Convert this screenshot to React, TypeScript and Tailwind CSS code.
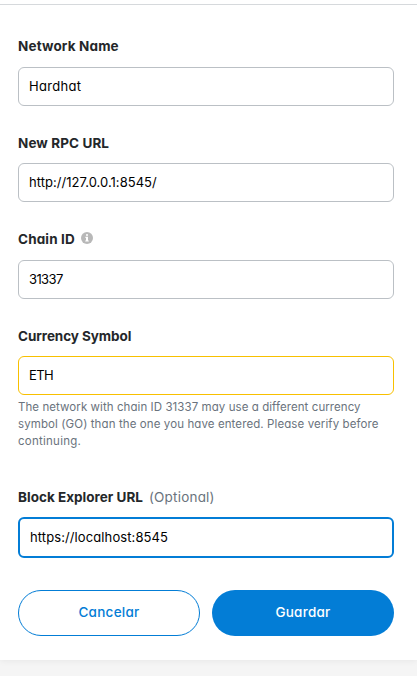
import type { ReactNode } from "react";

type FieldProps = {
  label: ReactNode;
  value: string;
  labelSpacing: string;
  valueSpacing: string;
  className?: string;
  boxClassName?: string;
  children?: ReactNode;
  extra?: ReactNode;
};

function Field({ label, value, labelSpacing, valueSpacing, className = "", boxClassName = "mt-[11px] h-[39px] border border-[#bbc0c5] px-[10px]", children, extra }: FieldProps) {
  return (
    <div className={className}>
      <div className="flex h-5 items-center text-[13.5px] leading-5 text-[#24272a]">
        <span className={`whitespace-nowrap font-bold ${labelSpacing}`}>{label}</span>
        {extra}
      </div>
      <div role="textbox" className={`flex items-center rounded-[6px] bg-white text-[13px] text-black ${boxClassName}`}>
        <span className={`whitespace-nowrap ${valueSpacing}`}>{value}</span>
      </div>
      {children}
    </div>
  );
}

function InfoIcon() {
  return (
    <svg className="mb-[2px] ml-[6px]" width="12" height="12" viewBox="0 0 12 12" aria-hidden="true">
      <circle cx="6" cy="6" r="6" fill="#b8b8b8" />
      <path d="M5 2.2h2v1.6H5zM4.4 4.8H7v3.6h.8v1.2H4.2V8.4H5V6h-.6z" fill="#fff" />
    </svg>
  );
}

export default function App() {
  return (
    <div className="h-[676px] w-full overflow-hidden bg-[#f5f5f5] font-['Inter','Liberation_Sans',sans-serif] [font-feature-settings:'cv11']">
      <main className="h-[660px] bg-white pt-1 shadow-[0_0_7px_rgba(0,0,0,0.08)]">
        <div className="h-px bg-[#d6d9dc]" />
        <form className="pl-[18px] pr-[23px] pt-[31px]">
          <Field label="Network Name" value="Hardhat" labelSpacing="tracking-[0.15px]" valueSpacing="tracking-[0.3px]" />
          <Field
            className="mt-[27px]"
            label="New RPC URL"
            value="http://127.0.0.1:8545/"
            labelSpacing="tracking-[0.1px]"
            valueSpacing="tracking-[0.03px]"
            boxClassName="mt-[10px] h-[39px] border border-[#bbc0c5] px-[10px]"
          />
          <Field className="mt-[27px]" label="Chain ID" value="31337" labelSpacing="tracking-[0.15px]" valueSpacing="tracking-[-0.6px]" extra={<InfoIcon />} />
          <Field
            className="mt-[27px]"
            label="Currency Symbol"
            value="ETH"
            labelSpacing="tracking-[-0.07px]"
            valueSpacing="tracking-[-0.6px]"
            boxClassName="mt-[10px] h-[39px] border border-[#f8c000] px-[10px]"
          >
            <p className="mt-[4px] whitespace-nowrap text-[11.5px] leading-[17px] text-[#6a737d]">
              <span className="block tracking-[0.07px]">The network with chain ID 31337 may use a different currency</span>
              <span className="block tracking-[0.1px]">symbol (GO) than the one you have entered. Please verify before</span>
              <span className="block tracking-[0.25px]">continuing.</span>
            </p>
          </Field>
          <Field
            className="mt-[37px]"
            label="Block Explorer URL"
            value="https://localhost:8545"
            labelSpacing="tracking-[0.02px]"
            valueSpacing="tracking-[0.1px]"
            boxClassName="mt-[10px] h-[41px] border-2 border-[#037dd6] px-[10px]"
            extra={<span className="ml-[6px] whitespace-nowrap text-[#6a737d] tracking-[0.2px]">(Optional)</span>}
          />
          <div className="mt-8 grid grid-cols-2 gap-3 text-[13.5px] font-medium tracking-[0.25px]">
            <button type="button" className="h-[46px] rounded-full border border-[#037dd6] pb-[1px] text-[#037dd6]">Cancelar</button>
            <button type="button" className="h-[46px] rounded-full bg-[#037dd6] pb-[1px] text-white">Guardar</button>
          </div>
        </form>
      </main>
    </div>
  );
}
